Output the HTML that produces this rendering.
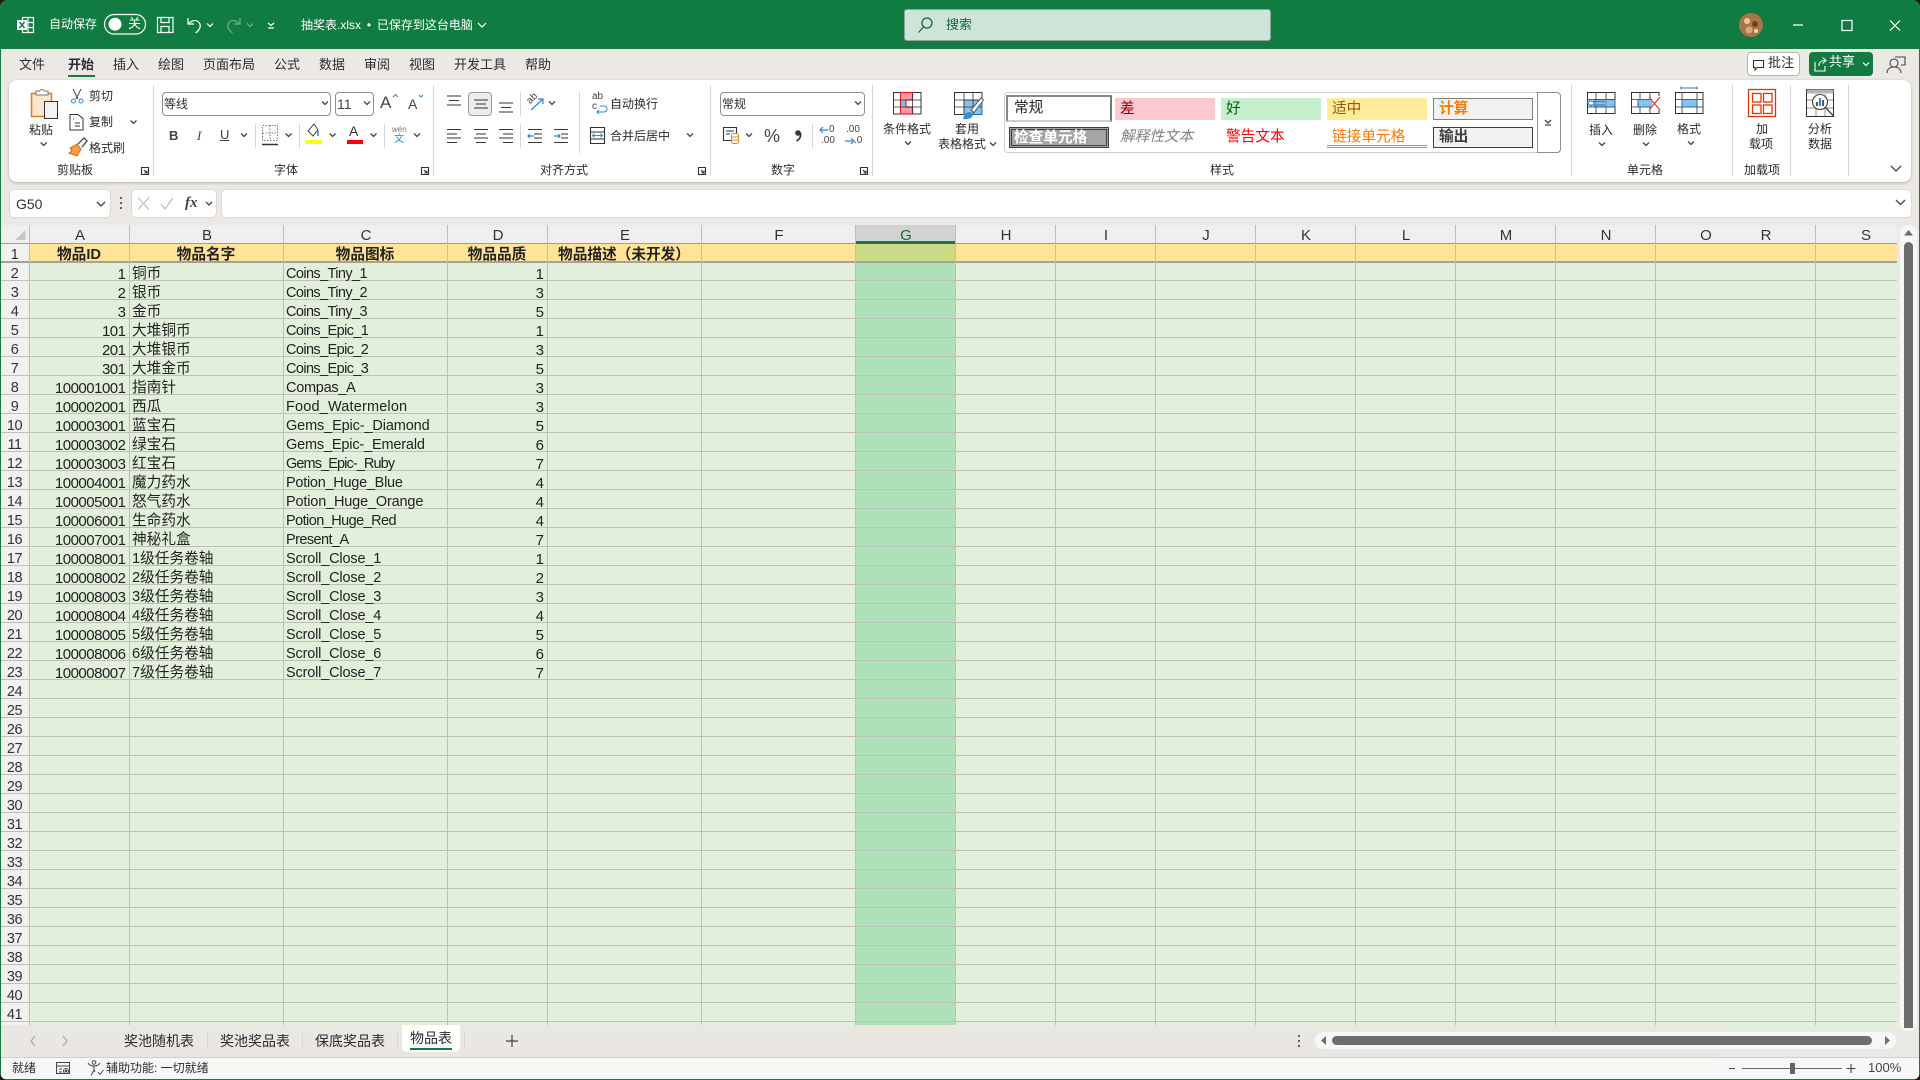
<!DOCTYPE html>
<html lang="zh-CN"><head><meta charset="utf-8"><title>抽奖表.xlsx</title>
<style>
html,body{margin:0;padding:0;width:1920px;height:1080px;overflow:hidden;background:#1a1a1a}
#app{position:absolute;left:0;top:0;width:1920px;height:1080px;background:#ECE9E4;overflow:hidden;border-radius:8px;font-family:"Liberation Sans","Noto Sans CJK SC",sans-serif;color:#2b2b2b}
.b{position:absolute}
.t{position:absolute;white-space:nowrap;line-height:16px;font-size:12px;color:#2b2b2b}
.w{color:#fff}
.s{position:absolute;width:1px;background:#d6d6d6}
.v{position:absolute;top:225px;height:800px;width:1px;background:#BCC0B8}
.box{position:absolute;background:#fff;border:1px solid #8f8f8f;border-radius:4px;box-sizing:border-box}
.st{position:absolute;box-sizing:border-box;font-size:14.67px;line-height:22px;white-space:nowrap;padding-left:5px}
.ch{position:absolute;top:225px;height:18px;line-height:22px;font-size:15px;color:#333;width:40px;margin-left:-19px;text-align:center}
#sheet{position:absolute;left:0;top:246px;border-collapse:collapse;table-layout:fixed;width:701px}
#sheet tr{height:19px}
#sheet th,#sheet td{height:19px;padding:0;line-height:19px;font-size:14.67px;font-weight:normal;white-space:nowrap;overflow:hidden;color:#222;box-sizing:border-box}
#sheet th{text-align:center;font-size:14.5px;letter-spacing:-.5px;color:#333}
#sheet td{padding:0 3px}
#sheet td.n{text-align:right;font-size:15px;letter-spacing:-.5px;padding-right:3.5px}
#sheet td.c{font-size:14.5px;letter-spacing:-.17px}
#sheet td.c.a{letter-spacing:-.6px}
#sheet tr.h td{text-align:center;font-weight:bold;padding:0}
svg{position:absolute;left:0;top:0}
.k{fill:none;stroke:#333;stroke-width:1.1}
.g{fill:none;stroke:#444;stroke-width:1.3}
</style></head><body><div id="app">

<!-- title bar -->
<div class="b" style="left:0;top:0;width:1920px;height:49px;background:#107C41"></div>
<span class="t w" style="left:49px;top:16px">自动保存</span>
<span class="t w" style="left:128px;top:16px;font-size:13px">关</span>
<span class="t w" style="left:301px;top:17px;word-spacing:2.5px">抽奖表.xlsx • 已保存到这台电脑</span>
<div class="b" style="left:904px;top:9px;width:367px;height:32px;box-sizing:border-box;background:#CFE3D9;border:1px solid #8fa69a;border-radius:3px"></div>
<span class="t" style="left:946px;top:17px;font-size:13px;color:#0F6A3A">搜索</span>

<!-- tabs -->
<span class="t" style="left:19px;top:57px;font-size:13px">文件</span>
<span class="t" style="left:68px;top:57px;font-size:13px;font-weight:bold">开始</span>
<div class="b" style="left:68px;top:75px;width:27px;height:2px;background:#107C41"></div>
<span class="t" style="left:113px;top:57px;font-size:13px">插入</span>
<span class="t" style="left:158px;top:57px;font-size:13px">绘图</span>
<span class="t" style="left:203px;top:57px;font-size:13px">页面布局</span>
<span class="t" style="left:274px;top:57px;font-size:13px">公式</span>
<span class="t" style="left:319px;top:57px;font-size:13px">数据</span>
<span class="t" style="left:364px;top:57px;font-size:13px">审阅</span>
<span class="t" style="left:409px;top:57px;font-size:13px">视图</span>
<span class="t" style="left:454px;top:57px;font-size:13px">开发工具</span>
<span class="t" style="left:525px;top:57px;font-size:13px">帮助</span>

<div class="b" style="left:1747px;top:52px;width:53px;height:24px;box-sizing:border-box;background:#fff;border:1px solid #b5b5b5;border-radius:4px"></div>
<span class="t" style="left:1768px;top:55px;font-size:13px">批注</span>
<div class="b" style="left:1809px;top:52px;width:64px;height:24px;background:#107C41;border-radius:4px"></div>
<span class="t w" style="left:1829px;top:54px;font-size:13px">共享</span>

<!-- ribbon panel -->
<div class="b" style="left:9px;top:80px;width:1902px;height:102px;background:#fff;border-radius:8px;box-shadow:0 1px 3px rgba(0,0,0,.25)"></div>
<div class="s" style="left:153px;top:85px;height:91px"></div>
<div class="s" style="left:433px;top:85px;height:91px"></div>
<div class="s" style="left:710px;top:85px;height:91px"></div>
<div class="s" style="left:872px;top:85px;height:91px"></div>
<div class="s" style="left:1571px;top:85px;height:91px"></div>
<div class="s" style="left:1732px;top:85px;height:91px"></div>
<div class="s" style="left:1790px;top:85px;height:91px"></div>
<div class="s" style="left:1848px;top:85px;height:91px"></div>
<div class="s" style="left:255px;top:124px;height:24px"></div>
<div class="s" style="left:299px;top:124px;height:24px"></div>
<div class="s" style="left:384px;top:124px;height:24px"></div>
<div class="s" style="left:520px;top:92px;height:24px"></div>
<div class="s" style="left:520px;top:124px;height:24px"></div>
<div class="s" style="left:579px;top:92px;height:61px"></div>
<div class="s" style="left:812px;top:124px;height:24px"></div>

<span class="t" style="left:57px;top:162px">剪贴板</span>
<span class="t" style="left:274px;top:162px">字体</span>
<span class="t" style="left:540px;top:162px">对齐方式</span>
<span class="t" style="left:771px;top:162px">数字</span>
<span class="t" style="left:1210px;top:162px">样式</span>
<span class="t" style="left:1627px;top:162px">单元格</span>
<span class="t" style="left:1744px;top:162px">加载项</span>

<span class="t" style="left:29px;top:122px">粘贴</span>
<span class="t" style="left:89px;top:88px">剪切</span>
<span class="t" style="left:89px;top:114px">复制</span>
<span class="t" style="left:89px;top:140px">格式刷</span>

<div class="box" style="left:162px;top:92px;width:169px;height:24px"></div>
<span class="t" style="left:164px;top:96px">等线</span>
<div class="box" style="left:335px;top:92px;width:39px;height:24px"></div>
<span class="t" style="left:337px;top:96px;font-size:14px;color:#444">11</span>
<span class="t" style="left:380px;top:93px;font-size:17px;line-height:20px;color:#444">A</span>
<span class="t" style="left:408px;top:95px;font-size:14px;line-height:18px;color:#444">A</span>
<span class="t" style="left:169px;top:128px;font-size:13px;font-weight:bold;color:#444">B</span>
<span class="t" style="left:197px;top:128px;font-size:13px;font-style:italic;font-family:'Liberation Serif',serif;color:#444">I</span>
<span class="t" style="left:220px;top:127px;font-size:13px;text-decoration:underline;color:#444">U</span>
<span class="t" style="left:349px;top:123px;font-size:14px;color:#333">A</span>
<span class="t" style="left:392px;top:125px;font-size:8px;line-height:9px;color:#777">wén</span>
<span class="t" style="left:394px;top:134px;font-size:10px;line-height:12px;color:#2b88d8">文</span>

<div class="b" style="left:468px;top:92px;width:24px;height:24px;box-sizing:border-box;background:#EDEDED;border:1px solid #9a9a9a;border-radius:4px"></div>
<span class="t" style="left:527px;top:93px;font-size:10px;line-height:12px;color:#444;transform:rotate(-45deg)">ab</span>
<span class="t" style="left:592px;top:92px;font-size:10px;line-height:10px;color:#444">ab</span>
<span class="t" style="left:592px;top:102px;font-size:10px;line-height:10px;color:#444">c</span>
<span class="t" style="left:610px;top:96px">自动换行</span>
<span class="t" style="left:610px;top:128px">合并后居中</span>

<div class="box" style="left:720px;top:92px;width:145px;height:24px"></div>
<span class="t" style="left:722px;top:96px">常规</span>
<span class="t" style="left:764px;top:126px;font-size:18px;line-height:20px;color:#444">%</span>
<span class="t" style="left:829px;top:124px;font-size:10px;line-height:11px;color:#444">0</span>
<span class="t" style="left:821px;top:135px;font-size:10px;line-height:11px;color:#444">.00</span>
<span class="t" style="left:846px;top:124px;font-size:10px;line-height:11px;color:#444">.00</span>
<span class="t" style="left:854px;top:135px;font-size:10px;line-height:11px;color:#444">.0</span>

<span class="t" style="left:883px;top:121px">条件格式</span>
<span class="t" style="left:955px;top:121px">套用</span>
<span class="t" style="left:938px;top:136px">表格格式</span>

<!-- style gallery -->
<div class="b" style="left:1004px;top:92px;width:534px;height:61px;box-sizing:border-box;border:1px solid #cfcfcf;border-radius:4px 0 0 4px"></div>
<div class="b" style="left:1537px;top:92px;width:24px;height:61px;box-sizing:border-box;border:1px solid #8c8c8c;border-radius:0 4px 4px 0;background:#fff"></div>
<div class="st" style="left:1006px;top:95px;width:106px;height:27px;background:#fff;border:2px solid #8a8a8a;border-bottom-color:#ccc;border-right-color:#777;padding-left:6px;color:#222">常规</div>
<div class="st" style="left:1115px;top:98px;width:100px;height:22px;background:#FFC7CE;color:#9C0006">差</div>
<div class="st" style="left:1221px;top:98px;width:100px;height:22px;background:#C6EFCE;color:#006100">好</div>
<div class="st" style="left:1327px;top:98px;width:100px;height:22px;background:#FFEB9C;color:#9C5700">适中</div>
<div class="st" style="left:1433px;top:98px;width:100px;height:22px;background:#F2F2F2;border:1px solid #7F7F7F;line-height:20px;color:#FA7D00;font-weight:bold">计算</div>
<div class="st" style="left:1009px;top:127px;width:100px;height:21px;background:#A5A5A5;border:3px double #3F3F3F;line-height:16px;padding-left:2px;color:#fff;font-weight:bold">检查单元格</div>
<div class="st" style="left:1115px;top:127px;width:100px;height:21px;color:#7F7F7F;font-style:italic;line-height:21px">解释性文本</div>
<div class="st" style="left:1221px;top:127px;width:100px;height:21px;color:#FF0000;line-height:21px">警告文本</div>
<div class="st" style="left:1327px;top:127px;width:100px;height:21px;color:#FA7D00;line-height:21px;border-bottom:3px double #FF8001">链接单元格</div>
<div class="st" style="left:1433px;top:127px;width:100px;height:21px;background:#F2F2F2;border:1px solid #3F3F3F;line-height:19px;color:#3F3F3F;font-weight:bold">输出</div>

<span class="t" style="left:1589px;top:122px">插入</span>
<span class="t" style="left:1633px;top:122px">删除</span>
<span class="t" style="left:1677px;top:121px">格式</span>
<span class="t" style="left:1756px;top:121px">加</span>
<span class="t" style="left:1749px;top:136px">载项</span>
<span class="t" style="left:1808px;top:121px">分析</span>
<span class="t" style="left:1808px;top:136px">数据</span>

<!-- formula bar -->
<div class="b" style="left:10px;top:190px;width:100px;height:27px;background:#fff;border-radius:4px;box-shadow:0 0 1px rgba(0,0,0,.4)"></div>
<div class="b" style="left:132px;top:190px;width:84px;height:27px;background:#fff;border-radius:4px;box-shadow:0 0 1px rgba(0,0,0,.4)"></div>
<div class="b" style="left:222px;top:190px;width:1689px;height:27px;background:#fff;border-radius:4px;box-shadow:0 0 1px rgba(0,0,0,.4)"></div>
<span class="t" style="left:16px;top:196px;font-size:14px;color:#333">G50</span>
<span class="t" style="left:185px;top:195px;font-size:15px;font-style:italic;font-weight:bold;font-family:'Liberation Serif',serif;color:#444">fx</span>

<!-- grid -->
<div class="b" style="left:0;top:225px;width:1897px;height:18px;background:#EFEFEF"></div>
<div class="b" style="left:1;top:243px;width:28px;height:782px;background:#F1F1F1"></div>
<div class="b" style="left:29px;top:243px;width:1868px;height:782px;background:#E2EFDA"></div>
<div class="b" style="left:855px;top:243px;width:100px;height:782px;background:#AFE1B9"></div>
<div class="b" style="left:29px;top:243px;width:1868px;height:19px;background:#FFE497"></div>
<div class="b" style="left:855px;top:243px;width:100px;height:19px;background:#C9DB85"></div>
<div class="b" style="left:855px;top:225px;width:100px;height:18px;background:#D2D2D2"></div>
<div class="b" style="left:1717px;top:1022px;width:180px;height:6px;background:#E2EFDA"></div>
<div class="b" style="left:0;top:243px;width:1897px;height:779px;background:repeating-linear-gradient(to bottom,transparent 0,transparent 18px,#BCC0B8 18px,#BCC0B8 19px)"></div>
<div class="b" style="left:0;top:243px;width:1897px;height:1px;background:#9c9c9c"></div>
<div class="b" style="left:0;top:261px;width:1897px;height:2px;background:#A3A39A"></div>
<div class="b" style="left:855px;top:241px;width:101px;height:3px;background:#217346"></div>
<div class="v" style="left:29px"></div><div class="v" style="left:129px"></div><div class="v" style="left:283px"></div><div class="v" style="left:447px"></div><div class="v" style="left:547px"></div><div class="v" style="left:701px"></div><div class="v" style="left:855px"></div><div class="v" style="left:955px"></div><div class="v" style="left:1055px"></div><div class="v" style="left:1155px"></div><div class="v" style="left:1255px"></div><div class="v" style="left:1355px"></div><div class="v" style="left:1455px"></div><div class="v" style="left:1555px"></div><div class="v" style="left:1655px"></div><div class="v" style="left:1815px"></div>

<span class="ch" style="left:79px">A</span><span class="ch" style="left:206px">B</span><span class="ch" style="left:365px">C</span><span class="ch" style="left:497px">D</span><span class="ch" style="left:624px">E</span><span class="ch" style="left:778px">F</span><span class="ch" style="left:905px;color:#0F6A3A">G</span><span class="ch" style="left:1005px">H</span><span class="ch" style="left:1105px">I</span><span class="ch" style="left:1205px">J</span><span class="ch" style="left:1305px">K</span><span class="ch" style="left:1405px">L</span><span class="ch" style="left:1505px">M</span><span class="ch" style="left:1605px">N</span><span class="ch" style="left:1705px">O</span><span class="ch" style="left:1765px">R</span><span class="ch" style="left:1865px">S</span>

<table id="sheet"><colgroup><col style="width:29px"><col style="width:100px"><col style="width:154px"><col style="width:164px"><col style="width:100px"><col style="width:154px"></colgroup>
<tr class="h"><th>1</th><td>物品ID</td><td>物品名字</td><td>物品图标</td><td>物品品质</td><td>物品描述（未开发）</td></tr>
<tr><th>2</th><td class="n">1</td><td>铜币</td><td class="c a">Coins_Tiny_1</td><td class="n">1</td><td></td></tr>
<tr><th>3</th><td class="n">2</td><td>银币</td><td class="c a">Coins_Tiny_2</td><td class="n">3</td><td></td></tr>
<tr><th>4</th><td class="n">3</td><td>金币</td><td class="c a">Coins_Tiny_3</td><td class="n">5</td><td></td></tr>
<tr><th>5</th><td class="n">101</td><td>大堆铜币</td><td class="c a">Coins_Epic_1</td><td class="n">1</td><td></td></tr>
<tr><th>6</th><td class="n">201</td><td>大堆银币</td><td class="c a">Coins_Epic_2</td><td class="n">3</td><td></td></tr>
<tr><th>7</th><td class="n">301</td><td>大堆金币</td><td class="c a">Coins_Epic_3</td><td class="n">5</td><td></td></tr>
<tr><th>8</th><td class="n">100001001</td><td>指南针</td><td class="c" style="letter-spacing:-.27px">Compas_A</td><td class="n">3</td><td></td></tr>
<tr><th>9</th><td class="n">100002001</td><td>西瓜</td><td class="c" style="letter-spacing:.17px">Food_Watermelon</td><td class="n">3</td><td></td></tr>
<tr><th>10</th><td class="n">100003001</td><td>蓝宝石</td><td class="c" style="letter-spacing:-.13px">Gems_Epic-_Diamond</td><td class="n">5</td><td></td></tr>
<tr><th>11</th><td class="n">100003002</td><td>绿宝石</td><td class="c">Gems_Epic-_Emerald</td><td class="n">6</td><td></td></tr>
<tr><th>12</th><td class="n">100003003</td><td>红宝石</td><td class="c" style="letter-spacing:-.9px">Gems_Epic-_Ruby</td><td class="n">7</td><td></td></tr>
<tr><th>13</th><td class="n">100004001</td><td>魔力药水</td><td class="c" style="letter-spacing:-.27px">Potion_Huge_Blue</td><td class="n">4</td><td></td></tr>
<tr><th>14</th><td class="n">100005001</td><td>怒气药水</td><td class="c">Potion_Huge_Orange</td><td class="n">4</td><td></td></tr>
<tr><th>15</th><td class="n">100006001</td><td>生命药水</td><td class="c" style="letter-spacing:-.57px">Potion_Huge_Red</td><td class="n">4</td><td></td></tr>
<tr><th>16</th><td class="n">100007001</td><td>神秘礼盒</td><td class="c" style="letter-spacing:-.57px">Present_A</td><td class="n">7</td><td></td></tr>
<tr><th>17</th><td class="n">100008001</td><td>1级任务卷轴</td><td class="c">Scroll_Close_1</td><td class="n">1</td><td></td></tr>
<tr><th>18</th><td class="n">100008002</td><td>2级任务卷轴</td><td class="c">Scroll_Close_2</td><td class="n">2</td><td></td></tr>
<tr><th>19</th><td class="n">100008003</td><td>3级任务卷轴</td><td class="c">Scroll_Close_3</td><td class="n">3</td><td></td></tr>
<tr><th>20</th><td class="n">100008004</td><td>4级任务卷轴</td><td class="c">Scroll_Close_4</td><td class="n">4</td><td></td></tr>
<tr><th>21</th><td class="n">100008005</td><td>5级任务卷轴</td><td class="c">Scroll_Close_5</td><td class="n">5</td><td></td></tr>
<tr><th>22</th><td class="n">100008006</td><td>6级任务卷轴</td><td class="c">Scroll_Close_6</td><td class="n">6</td><td></td></tr>
<tr><th>23</th><td class="n">100008007</td><td>7级任务卷轴</td><td class="c">Scroll_Close_7</td><td class="n">7</td><td></td></tr>
<tr><th>24</th></tr><tr><th>25</th></tr><tr><th>26</th></tr><tr><th>27</th></tr><tr><th>28</th></tr><tr><th>29</th></tr><tr><th>30</th></tr><tr><th>31</th></tr><tr><th>32</th></tr><tr><th>33</th></tr><tr><th>34</th></tr><tr><th>35</th></tr><tr><th>36</th></tr><tr><th>37</th></tr><tr><th>38</th></tr><tr><th>39</th></tr><tr><th>40</th></tr><tr><th>41</th></tr>
</table>

<!-- sheet tab bar -->
<div class="b" style="left:1px;top:1025px;width:1716px;height:32px;background:#EAE7E2"></div>
<div class="b" style="left:1717px;top:1028px;width:200px;height:29px;background:#E8E8E5"></div>
<div class="b" style="left:1897px;top:225px;width:22px;height:832px;background:#E9E9E6"></div>
<div class="b" style="left:402px;top:1025px;width:58px;height:27px;background:#fff;border-radius:0 0 5px 5px"></div>
<div class="b" style="left:410px;top:1048px;width:42px;height:2px;background:#107C41"></div>
<div class="s" style="left:207px;top:1033px;height:15px"></div>
<div class="s" style="left:302px;top:1033px;height:15px"></div>
<div class="s" style="left:397px;top:1033px;height:15px"></div>
<div class="s" style="left:464px;top:1033px;height:15px"></div>
<span class="t" style="left:124px;top:1033px;font-size:14px">奖池随机表</span>
<span class="t" style="left:220px;top:1033px;font-size:14px">奖池奖品表</span>
<span class="t" style="left:315px;top:1033px;font-size:14px">保底奖品表</span>
<span class="t" style="left:410px;top:1030px;font-size:14px">物品表</span>

<!-- scrollbars -->
<div class="b" style="left:1900px;top:225px;width:17px;height:806px;background:#F7F7F7;border-radius:8px"></div>
<div class="b" style="left:1904px;top:242px;width:9px;height:786px;background:#6E6E6E;border-radius:5px 5px 0 0"></div>
<div class="b" style="left:1315px;top:1032px;width:581px;height:17px;background:#F7F7F7;border-radius:8px"></div>
<div class="b" style="left:1332px;top:1036px;width:540px;height:9px;background:#6E6E6E;border-radius:5px"></div>

<!-- status bar -->
<div class="b" style="left:1px;top:1057px;width:1918px;height:22px;background:#F7F7F6;border-top:1px solid #CFCFCF;box-sizing:border-box"></div>
<span class="t" style="left:12px;top:1060px">就绪</span>
<span class="t" style="left:106px;top:1060px">辅助功能: 一切就绪</span>
<span class="t" style="left:1868px;top:1060px;font-size:13px;color:#444">100%</span>
<div class="b" style="left:1742px;top:1068px;width:100px;height:1px;background:#666"></div>
<div class="b" style="left:1790px;top:1063px;width:5px;height:11px;background:#666"></div>
<div class="b" style="left:0;top:1079px;width:1920px;height:1px;background:#107C41"></div>
<div class="b" style="left:0;top:49px;width:1px;height:1030px;background:#107C41"></div>
<div class="b" style="left:1919px;top:49px;width:1px;height:1030px;background:#107C41"></div>

<!-- icons -->
<svg width="1920" height="1080" viewBox="0 0 1920 1080" fill="none">
 <!-- title bar -->
 <g stroke="#fff" stroke-width="1.2">
  <path d="M22.5 17.5h11v15h-11zM22.5 22.5h11M22.5 27.5h11M28 17.5v15"/>
  <rect x="17" y="20" width="10" height="10" fill="#fff" stroke="none"/>
  <path d="M19.5 22l5 6M24.5 22l-5 6" stroke="#107C41" stroke-width="1.5"/>
  <rect x="104.5" y="14.5" width="41" height="19.5" rx="9.7"/>
  <circle cx="115" cy="24.2" r="6.5" fill="#fff" stroke="none"/>
  <path d="M157.5 17.5h15.5v15h-15.5zM161 17.5v5h8v-5M161 32.5v-6h8v6"/>
  <path d="M188 18v6h6M188.5 24c3-4 8-4.500 10.500-1.500 2.500 3 1 7.500-3.500 10.500"/>
  <path d="M207 23.500l3 3 3-3M478 23l4 4 4-4"/>
  <path d="M268 23l3 2.500 3-2.500M268 28h6M1793 25h10M1842 20.500h10v10h-10zM1890 20.500l10 10M1900 20.500l-10 10"/>
 </g>
 <g stroke="#6FAE8B" stroke-width="1.2">
  <path d="M240 18v6h-6M239.500 24c-3-4-8-4.500-10.500-1.500-2.500 3-1 7.500 3.500 10.500M247 23.500l3 3 3-3"/>
 </g>
 <g stroke="#0F6A3A" stroke-width="1.3"><circle cx="927" cy="23" r="5"/><path d="M923.500 27l-5 5.500"/></g>
 <circle cx="1751" cy="25" r="12" fill="#A8744A"/>
 <circle cx="1747" cy="21" r="3" fill="#E8C9A0"/><circle cx="1755" cy="24" r="3" fill="#7A3A20"/><circle cx="1749" cy="30" r="3.500" fill="#D9A871"/><circle cx="1756" cy="31" r="2" fill="#EBD5B8"/>
 <!-- comment / share / person -->
 <path d="M1753.500 60.500h10v7h-6l-2.500 2.500v-2.500h-1.500z" stroke="#333" stroke-width="1.1"/>
 <path d="M1815 62v9h10v-5M1819 66c0-4 2-5.500 6-5.500M1822.500 57.500l3.500 3-3.500 3" stroke="#fff" stroke-width="1.1"/>
 <path d="M1863 62.500l3 3 3-3" stroke="#fff" stroke-width="1.2"/>
 <g stroke="#444" stroke-width="1.1"><circle cx="1894" cy="63" r="4"/><path d="M1887 73c0-4 3-6 7-6s7 2 7 6M1895 57h10v8h-4"/></g>
 <!-- clipboard -->
 <rect x="31.500" y="93.500" width="20" height="23" fill="#FBE7CC" stroke="#D9842B" stroke-width="1.600"/>
 <path d="M36 93v-2h3.500a3 3 0 0 1 5 0h3.500v4h-12z" fill="#fff" stroke="#777"/>
 <rect x="44.500" y="101.500" width="13" height="17" fill="#F3F3F3" stroke="#333"/>
 <g stroke="#444" stroke-width="1"><path d="M73 89l5 10M81 89l-5 10"/><circle cx="73.500" cy="101" r="2" stroke="#2B88D8"/><circle cx="81" cy="101" r="2" stroke="#2B88D8"/></g>
 <path d="M70 114.500h8l5 4v11.500h-13zM73 119h1M75 123h5M75 126h5M70 116v13" stroke="#333" stroke-width="1"/>
 <path d="M70 148l7-4 4 5-4 7-8-3 3-2z" fill="#F7A13C" stroke="#D9642B"/>
 <path d="M78 144l6-6 3 3-5 6" stroke="#555" stroke-width="1.400"/>
 <!-- chevrons -->
 <path class="g" d="M130.500 120.500l3 3 3-3M40.700 142.500l3 3 3-3M322 101.500l3 3 3-3M364 101.500l3 3 3-3M241 133.500l3 3 3-3M285.600 133.500l3 3 3-3M329.600 133.500l3 3 3-3M370.500 133.500l3 3 3-3M414 133.500l3 3 3-3M549 101.500l3 3 3-3M687 133.500l3 3 3-3M855 101.500l3 3 3-3M746 133.500l3 3 3-3M905 141.500l3 3 3-3M990 142.500l3 3 3-3M1599 142.500l3 3 3-3M1643 142.500l3 3 3-3M1688 141.500l3 3 3-3M1545 120l3 3 3-3M1545 125h6M1891 166l5 5 5-5M97 202l4 4 4-4M206 202l3 3 3-3M1896 200l4.500 4.500 4.500-4.500"/>
 <!-- launchers -->
 <g class="k" stroke-width=".9"><path d="M141.500 167.500h7v7h-7zM144 170l3 3M147 170.500v2.500h-2.500M421.500 167.500h7v7h-7zM424 170l3 3M427 170.500v2.500h-2.500M698.500 167.500h7v7h-7zM701 170l3 3M704 170.500v2.500h-2.500M860.500 167.500h7v7h-7zM863 170l3 3M866 170.500v2.500h-2.500"/></g>
 <!-- font grow shrink -->
 <path d="M393 97l2.500-2.500 2.500 2.500" stroke="#2B88D8"/><path d="M419 95l2 2 2-2" stroke="#2B88D8"/>
 <!-- borders / fill / color -->
 <path d="M262.500 125.500h15v15h-15zM270 125.500v15M262.500 133h15" stroke="#777" stroke-dasharray="1.500 1.500"/>
 <path d="M262 144.500h16" stroke="#333" stroke-width="1.500"/>
 <path d="M314 124l-6 7 5 5 5-6z" stroke="#444"/><path d="M318 131v5" stroke="#2B88D8" stroke-width="1.500"/>
 <rect x="306" y="140" width="16" height="4" fill="#FFFF00"/>
 <rect x="347" y="140" width="16" height="4" fill="#FF0000"/>
 <!-- alignment -->
 <g class="k"><path d="M447 96h14M449 100.500h10M447 105h14"/><path d="M474 100h14M476 104h10M474 108h14"/><path d="M499 103h14M501 107.500h10M499 112h14"/>
  <path d="M447 129.500h14M447 134h10M447 138h14M447 142.500h10"/><path d="M474 129.500h14M476 134h10M474 138h14M476 142.500h10"/><path d="M499 129.500h14M503 134h10M499 138h14M503 142.500h10"/>
  <path d="M534 134h8M534 138h8M528 142.500h14M528 129.500h14"/><path d="M554 129.500h14M561 134h7M561 138h7M554 142.500h14"/>
 </g>
 <path d="M528 136h6M530 134l-2 2 2 2M554 136h6M558 134l2 2-2 2M531 110l12-11M538 99h5v5" stroke="#2B88D8" stroke-width="1.200"/>
 <path d="M600 106h4a2 2 0 0 1 0 6h-6M599 110l-2 2 2 2" stroke="#2B88D8"/>
 <g class="k"><path d="M590.500 127.500h14v16h-14zM590.500 132h14M590.500 139h14"/></g>
 <path d="M593 135.500h9M594.500 133.500l-2 2 2 2M600.500 133.500l2 2-2 2" stroke="#2B88D8"/>
 <!-- number format -->
 <g class="k"><path d="M723.500 127.500h13v13h-13zM726 131h8M726 134h4"/></g>
 <rect x="731.500" y="133.500" width="7" height="10" rx="2" fill="#fff" stroke="#E8841B"/><path d="M732 137h6M732 140h6" stroke="#E8841B"/>
 <circle cx="798" cy="133" r="2.800" fill="#333"/><path d="M800.500 133c.5 3.500-1 6.500-4 8" stroke="#333" stroke-width="1.600"/>
 <path d="M828 130h-8M823 127l-3 3 3 3M845 141h9M851 138l3 3-3 3" stroke="#2B88D8" stroke-width="1.200"/>
 <!-- conditional format -->
 <g><rect x="893.500" y="92.500" width="27.500" height="21.500" fill="#fff" stroke="#333"/>
  <path d="M900 93h12v7h-6v7h6v7h-12z" fill="#FF97A5"/><rect x="900" y="100" width="6" height="7" fill="#82BDE8"/>
  <path d="M900.500 92.500h12v7.500h-6.500v7h6.500v7h-12z" stroke="#E8202A" stroke-width="1.200"/>
  <path d="M900 100h21M900 107h21M912.500 93v21M893.500 100h7M893.500 107h7" stroke="#333" stroke-width=".8"/></g>
 <!-- table format -->
 <g><rect x="954.500" y="92.500" width="27.500" height="22" fill="#fff" stroke="#333"/>
  <rect x="964" y="100" width="18" height="14.500" fill="#8CC1EA" stroke="#1E6FB0"/>
  <path d="M954 100h28M954 107h28M964 93v21M973 93v21" stroke="#333" stroke-width=".8"/>
  <path d="M981 98l2.500 2-9.500 12.500-3-2.500z" fill="#fff" stroke="#555"/>
  <path d="M963 119c1-5 3-7 7-7l3 2c0 4-5 6-10 5z" fill="#3B8FD0"/></g>
 <!-- insert -->
 <g><rect x="1587.500" y="92.500" width="27.500" height="21" fill="#fff" stroke="#333"/>
  <rect x="1594" y="99.500" width="21" height="7.500" fill="#8CC1EA" stroke="#1E6FB0"/>
  <path d="M1587 99.500h28M1587 107h28M1596 93v21M1606 93v21" stroke="#333" stroke-width=".8"/>
  <rect x="1594" y="99.500" width="21" height="7.500" fill="#8CC1EA" opacity=".6" stroke="#1E6FB0"/>
  <path d="M1605 101.500h-14M1605 105h-14M1592 99l-4.500 4 4.500 4" stroke="#2B88D8" stroke-width="1.300" fill="#fff"/></g>
 <!-- delete -->
 <g><rect x="1631.500" y="92.500" width="27.500" height="21" fill="#fff" stroke="#333"/>
  <path d="M1638 99.500h15l3 4-3 3.500h-15z" fill="#8CC1EA" stroke="#1E6FB0"/>
  <path d="M1631 99.500h7M1631 107h7M1640 93v6M1650 93v6M1640 107v7M1650 107v7" stroke="#333" stroke-width=".8"/>
  <rect x="1652" y="96" width="9" height="14" fill="#fff"/><path d="M1649 97l11 13M1660 97l-11 13" stroke="#E8404A" stroke-width="1.300"/></g>
 <!-- format cell -->
 <g><path d="M1681 88h16M1681 86.500v3M1697 86.500v3" stroke="#1E7FC0" stroke-width="1.100"/>
  <rect x="1675.500" y="92.500" width="27.500" height="21" fill="#fff" stroke="#333"/>
  <rect x="1682" y="99.500" width="15" height="7.500" fill="#8CC1EA" stroke="#1E6FB0"/>
  <path d="M1675 99.500h7M1697 99.500h6M1675 107h7M1697 107h6M1682 93v6M1697 93v6M1682 107v7M1697 107v7" stroke="#333" stroke-width=".8"/></g>
 <!-- add-ins -->
 <g stroke="#D83B01" stroke-width="1.300"><rect x="1748.500" y="89.500" width="27" height="27"/><rect x="1752.500" y="93.500" width="8.500" height="8.500"/><rect x="1763.500" y="93.500" width="8.500" height="8.500"/><rect x="1752.500" y="105" width="8.500" height="8.500"/><rect x="1763.500" y="105" width="8.500" height="8.500"/></g>
 <!-- analyse -->
 <g><rect x="1806.500" y="89.500" width="27" height="27" fill="#fff" stroke="#333"/><rect x="1807" y="89.500" width="26.500" height="4" fill="#B5B5B5"/>
  <path d="M1807 100h26M1807 108h26M1816 94v22M1825 94v22" stroke="#666" stroke-width=".7"/>
  <circle cx="1820" cy="102" r="7.500" fill="#fff" stroke="#444" stroke-width="1.100"/>
  <path d="M1825.500 107.500l8.500 9" stroke="#444" stroke-width="1.300"/>
  <rect x="1816" y="102" width="2" height="4" fill="#555"/><rect x="1819" y="98" width="2" height="8" fill="#2B88D8"/><rect x="1822" y="100" width="2" height="6" fill="#555"/></g>
 <!-- formula bar -->
 <circle cx="121" cy="198" r="1" fill="#333"/><circle cx="121" cy="203" r="1" fill="#333"/><circle cx="121" cy="208" r="1" fill="#333"/>
 <path d="M138 197.500l11 12M149 197.500l-11 12M161 204l4 5 8-11" stroke="#BDBDBD" stroke-width="1.200"/>
 <path d="M25.500 230v10h-10.500z" fill="#C6C6C6"/>
 <!-- scrollbar arrows -->
 <path d="M1904 235.500h9l-4.500-5.500z" fill="#6E6E6E"/>
 <path d="M1326 1036v9l-5-4.500zM1885 1036v9l5-4.500z" fill="#6E6E6E"/>
 <!-- tab bar -->
 <path d="M35 1036l-4 5 4 5M63 1036l4 5-4 5" stroke="#A8A8A8" stroke-width="1.200"/>
 <path d="M512 1035v12M506 1041h12" stroke="#444" stroke-width="1.200"/>
 <circle cx="1299" cy="1036" r="1" fill="#333"/><circle cx="1299" cy="1041" r="1" fill="#333"/><circle cx="1299" cy="1046" r="1" fill="#333"/>
 <!-- status icons -->
 <g stroke="#444" stroke-width="1"><path d="M56.500 1062.500h13v11h-13zM56.500 1066h13M59 1069h3M59 1072h3"/><circle cx="66" cy="1071" r="2.500" fill="#F7F7F6"/><circle cx="66" cy="1071" r=".8" fill="#444"/></g>
 <g stroke="#444" stroke-width="1"><circle cx="94" cy="1062.500" r="1.800"/><path d="M88 1063c1 2 3 3 6 3s5-1 6-3M94 1066v4l-3 5.500M94 1070l1 2M98 1072l2 2.500 3.500-4.500"/></g>
 <path d="M1729 1068.500h6M1851 1064v9M1846.500 1068.500h9" stroke="#444" stroke-width="1.100"/>
</svg>
</div></body></html>
